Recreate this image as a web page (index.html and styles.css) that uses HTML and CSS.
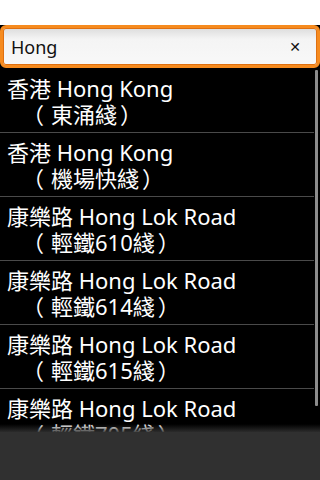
FILE: index.html
```html
<!DOCTYPE html>
<html lang="zh-Hant">
<head>
    <meta charset="UTF-8">
    <meta name="viewport" content="width=device-width, initial-scale=1.0">
    <title>Search</title>
    <link rel="stylesheet" href="styles.css">
</head>
<body>

<div class="top-strip"></div>

<div class="search-bar">
    <div class="search-box">
        <span class="search-text">Hong</span>
        <span class="clear-btn">&#x2715;</span>
    </div>
</div>

<div class="list">
    <div class="row">
        <div class="name">香港 Hong Kong</div>
        <div class="line"><span class="paren open">（</span>東涌綫<span class="paren close">）</span></div>
    </div>
    <div class="row">
        <div class="name">香港 Hong Kong</div>
        <div class="line"><span class="paren open">（</span>機場快綫<span class="paren close">）</span></div>
    </div>
    <div class="row">
        <div class="name">康樂路 Hong Lok Road</div>
        <div class="line"><span class="paren open">（</span>輕鐵610綫<span class="paren close">）</span></div>
    </div>
    <div class="row">
        <div class="name">康樂路 Hong Lok Road</div>
        <div class="line"><span class="paren open">（</span>輕鐵614綫<span class="paren close">）</span></div>
    </div>
    <div class="row">
        <div class="name">康樂路 Hong Lok Road</div>
        <div class="line"><span class="paren open">（</span>輕鐵615綫<span class="paren close">）</span></div>
    </div>
    <div class="row">
        <div class="name">康樂路 Hong Lok Road</div>
        <div class="line"><span class="paren open">（</span>輕鐵705綫<span class="paren close">）</span></div>
    </div>
    <div class="scrollbar"></div>
</div>

<div class="bottom-bar"></div>

</body>
</html>
```

FILE: styles.css
```css
html, body {
    height: 100%;
}

body {
    margin: 0;
    background: #000;
    font-family: "Noto Sans", "Noto Sans CJK TC", sans-serif;
    color: #fff;
    display: flex;
    flex-direction: column;
    overflow: hidden;
}

.top-strip {
    height: 25px;
    background: #fff;
    flex-shrink: 0;
}

.search-bar {
    flex-shrink: 0;
    height: 43px;
    background: #000;
}

.search-box {
    height: 43px;
    box-sizing: border-box;
    border: 3px solid #f68b1f;
    border-radius: 6px;
    box-shadow: inset 0 0 0 1px #e07010;
    background: linear-gradient(to bottom, #dcdcdc 0%, #f4f4f4 30%, #f8f8f8 100%);
    display: flex;
    align-items: center;
    justify-content: space-between;
    padding: 0 16px 0 8px;
    color: #111;
}

.search-text {
    font-size: 18px;
}

.clear-btn {
    font-size: 14px;
    font-weight: bold;
    font-family: "DejaVu Sans", sans-serif;
}

.list {
    flex: 1;
    overflow: hidden;
    position: relative;
}

.row {
    height: 64px;
    border-bottom: 1px solid #4a4a4a;
    margin-right: 6px;
    padding: 6px 0 0 7px;
    box-sizing: border-box;
    font-size: 22px;
    line-height: 26px;
}

.row:first-child {
    height: 65px;
    padding-top: 7px;
}

.line {
    padding-left: 22px;
}

.paren {
    display: inline-block;
    width: 22px;
    text-align: center;
}

/* the CJK paren glyph sits off-centre, nudge it back */
.paren.open {
    margin-left: -7px;
    margin-right: 7px;
}

.paren.close {
    margin-left: 3px;
}

.scrollbar {
    position: absolute;
    right: 2px;
    top: 2px;
    width: 3px;
    height: 336px;
    background: #8c8c8c;
    border-radius: 1px;
}

.bottom-bar {
    flex-shrink: 0;
    height: 48px;
    background: #303030;
    position: relative;
}

.bottom-bar::before {
    content: "";
    position: absolute;
    left: 0;
    right: 0;
    top: -8px;
    height: 8px;
    background: linear-gradient(to bottom, rgba(48, 48, 48, 0), rgba(48, 48, 48, 0.9));
}
```
